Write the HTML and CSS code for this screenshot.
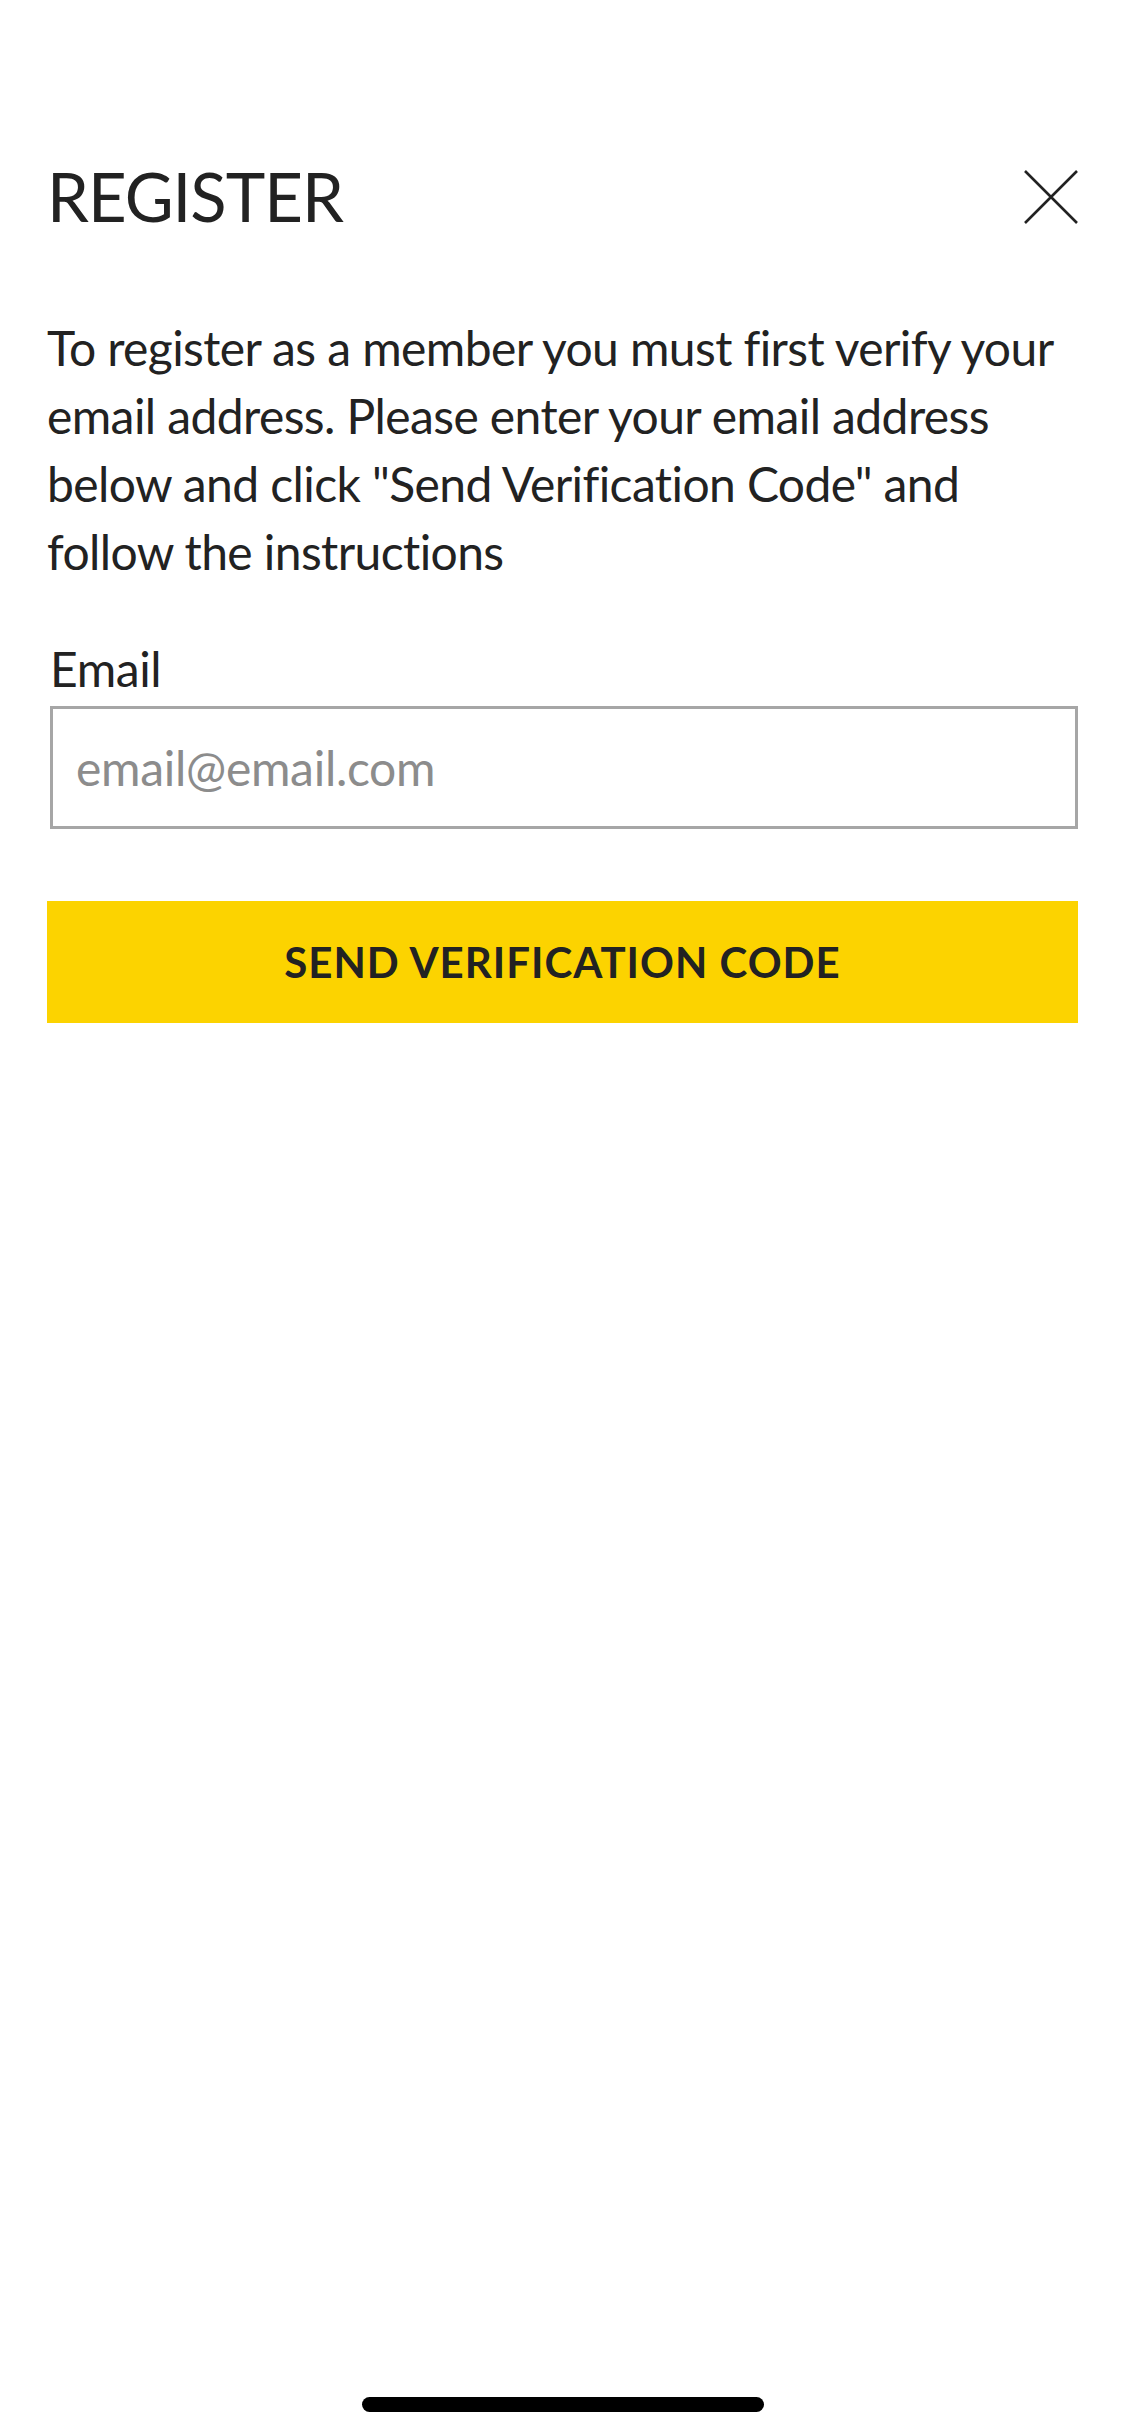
FILE: index.html
```html
<!DOCTYPE html>
<html lang="en">
<head>
    <meta charset="UTF-8">
    <meta name="viewport" content="width=device-width, initial-scale=1.0">
    <title>Register</title>
    <link rel="stylesheet" href="styles.css">
</head>
<body>

    <div class="screen">
        <!-- header with title and close -->
        <div class="modal-head">
            <h1 class="modal-title">REGISTER</h1>
            <button class="close-btn" aria-label="Close">
                <svg width="56" height="56" viewBox="0 0 56 56">
                    <path d="M2 2 L54 54 M54 2 L2 54" stroke="#222" stroke-width="2.6" fill="none"/>
                </svg>
            </button>
        </div>

        <p class="intro">To register as a member you must first verify your email address. Please enter your email address below and click "Send Verification Code" and follow the instructions</p>

        <form class="register-form" onsubmit="return false">
            <label class="field-label" for="email">Email</label>
            <input class="field-input" id="email" type="email" placeholder="email@email.com">
            <button class="send-btn" type="submit">SEND VERIFICATION CODE</button>
        </form>

        <div class="home-indicator"></div>
    </div>

</body>
</html>
```

FILE: styles.css
```css
body {
    margin: 0;
    background: #fff;
    color: #222;
    font-family: 'Lato', 'Liberation Sans', sans-serif;
}
.screen {
    display: flex;
    flex-direction: column;
    min-height: 2436px;
    box-sizing: border-box;
    padding: 163px 47px 24px;
}
.modal-head {
    display: flex;
    justify-content: space-between;
    align-items: center;
}
.modal-title {
    margin: 0;
    font-size: 67px;
    font-weight: 400;
    line-height: 1;
    letter-spacing: -1px;
}
.close-btn {
    background: none;
    border: none;
    padding: 0;
    margin-right: -1px;
    width: 56px;
    height: 56px;
    cursor: pointer;
}
.close-btn svg {
    display: block;
}
.intro {
    margin: 84px 0 0;
    font-size: 48px;
    line-height: 68px;
    letter-spacing: -0.6px;
}
.register-form {
    display: flex;
    flex-direction: column;
    margin-top: 52px;
}
.field-label {
    padding-left: 3px;
    font-size: 48px;
    line-height: 61px;
    letter-spacing: -0.4px;
}
.field-input {
    margin: 7px 0 0 3px;
    height: 123px;
    box-sizing: border-box;
    border: 3px solid #a6a6a6;
    border-radius: 0;
    padding: 0 23px;
    font-family: inherit;
    font-size: 48px;
    letter-spacing: -0.3px;
    color: #222;
    outline: none;
}
.field-input::placeholder {
    color: #8c8c8c;
}
.send-btn {
    margin-top: 72px;
    height: 122px;
    border: none;
    background: #fcd300;
    color: #222;
    font-family: inherit;
    font-size: 42px;
    font-weight: 700;
    letter-spacing: 1px;
    cursor: pointer;
}
.home-indicator {
    margin: auto auto 0;
    width: 402px;
    height: 15px;
    border-radius: 8px;
    background: #000;
}
```
